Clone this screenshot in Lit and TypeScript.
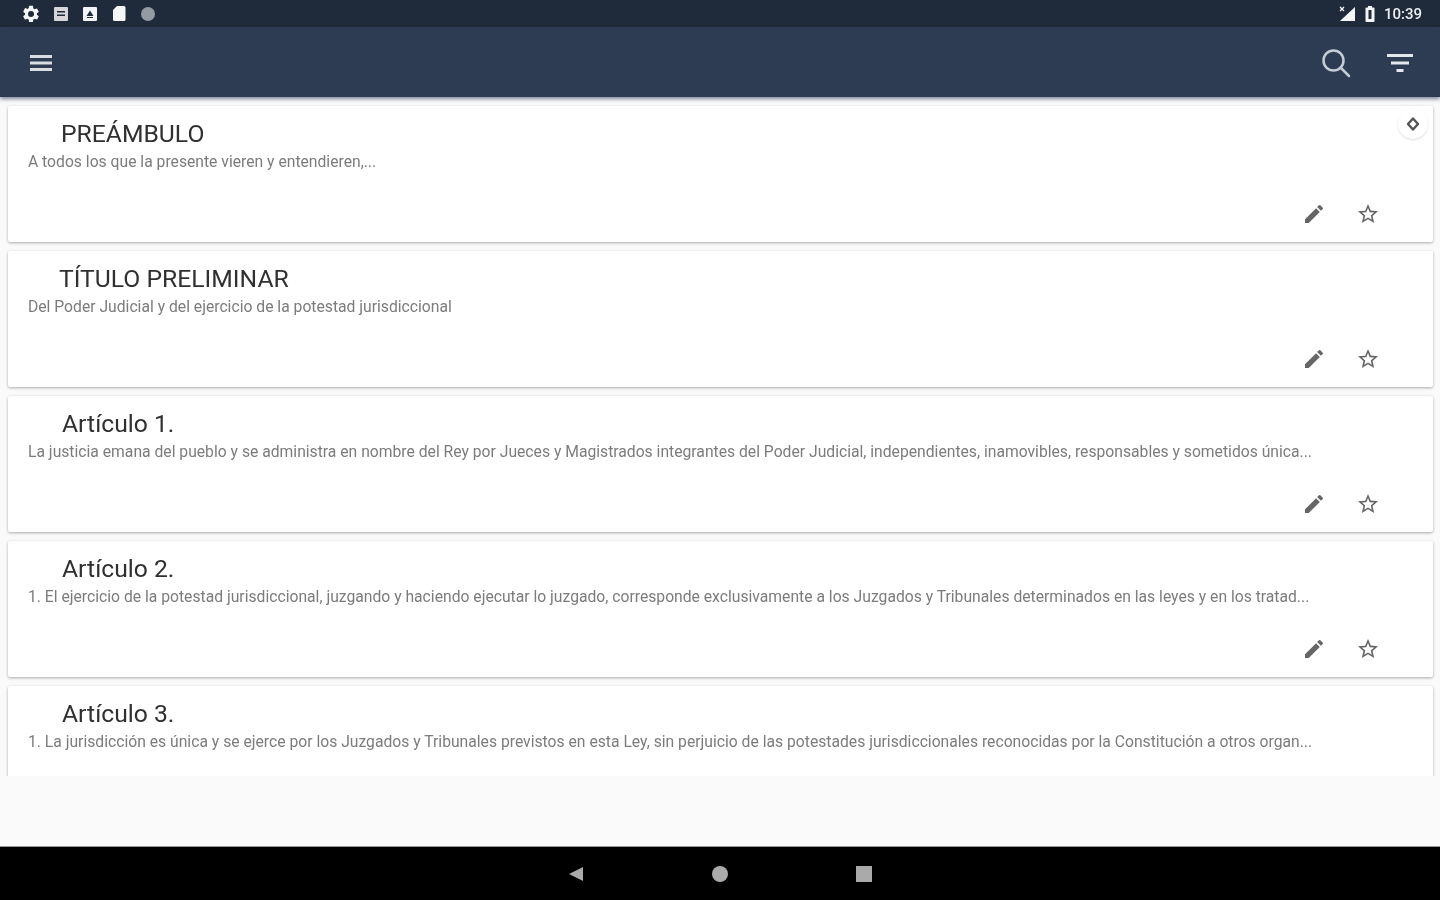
import { LitElement, html, css, svg } from "lit";
import { customElement } from "lit/decorators.js";

const items = [
  { t: "PREÁMBULO", x: 33, s: "A todos los que la presente vieren y entendieren,...", pin: true },
  { t: "TÍTULO PRELIMINAR", x: 31, s: "Del Poder Judicial y del ejercicio de la potestad jurisdiccional" },
  { t: "Artículo 1.", x: 34, s: "La justicia emana del pueblo y se administra en nombre del Rey por Jueces y Magistrados integrantes del Poder Judicial, independientes, inamovibles, responsables y sometidos única..." },
  { t: "Artículo 2.", x: 34, s: "1. El ejercicio de la potestad jurisdiccional, juzgando y haciendo ejecutar lo juzgado, corresponde exclusivamente a los Juzgados y Tribunales determinados en las leyes y en los tratad..." },
  { t: "Artículo 3.", x: 34, s: "1. La jurisdicción es única y se ejerce por los Juzgados y Tribunales previstos en esta Ley, sin perjuicio de las potestades jurisdiccionales reconocidas por la Constitución a otros organ..." },
];

const gear = svg`<path d="M19.14 12.94c.04-.3.06-.61.06-.94s-.02-.64-.07-.94l2.03-1.58a.49.49 0 0 0 .12-.61l-1.92-3.32a.49.49 0 0 0-.59-.22l-2.39.96a7 7 0 0 0-1.62-.94l-.36-2.54A.48.48 0 0 0 13.92 2h-3.84a.47.47 0 0 0-.47.41l-.36 2.54c-.59.24-1.13.57-1.62.94l-2.39-.96a.48.48 0 0 0-.59.22L2.74 8.87a.47.47 0 0 0 .12.61l2.03 1.58c-.05.3-.09.63-.09.94s.02.64.07.94l-2.03 1.58a.49.49 0 0 0-.12.61l1.92 3.32c.12.22.37.29.59.22l2.39-.96c.5.38 1.03.7 1.62.94l.36 2.54c.05.24.24.41.48.41h3.84c.24 0 .44-.17.47-.41l.36-2.54c.59-.24 1.13-.56 1.62-.94l2.39.96c.22.08.47 0 .59-.22l1.92-3.32a.47.47 0 0 0-.12-.61l-2.01-1.58zM12 15.6A3.6 3.6 0 1 1 12 8.4a3.6 3.6 0 0 1 0 7.2z"/>`;

@customElement("app-root")
export class AppRoot extends LitElement {
  static styles = css`
    :host { display: flex; flex-direction: column; height: 900px; width: 1440px; background: #fafafa; font-family: Roboto, "Liberation Sans", sans-serif; overflow: hidden; filter: blur(.55px); }
    .status { height: 27px; flex: none; background: #1f2a3a; display: flex; align-items: center; padding: 0 18px 0 21px; }
    .status-left { display: flex; align-items: center; gap: 11px; flex: 1; }
    .status-left svg, .status-right svg { display: block; fill: #f4f5f6; }
    .status-right { display: flex; align-items: center; color: #eceef0; font-size: 15px; font-weight: 500; }
    .sim { margin-right: 7px; }
    .batt { margin-right: 7px; }
    .toolbar { height: 70px; box-sizing: border-box; padding: 2px 27px 0 30px; flex: none; background: #2d3c52; display: flex; align-items: center; box-shadow: 0 2px 4px rgba(20,35,70,.55); position: relative; z-index: 1; }
    .toolbar svg { display: block; }
    .spacer { flex: 1; }
    .search { margin-right: 36px; }
    .list { height: 679px; box-sizing: border-box; flex: none; overflow: hidden; padding: 9px 7px 0 8px; display: flex; flex-direction: column; gap: 9px; background: #fafafa; }
    .card { flex: none; height: 136px; box-sizing: border-box; background: #fff; border-radius: 2px; box-shadow: 0 1px 3px rgba(0,0,0,.32); display: flex; flex-direction: column; padding: 13px 0 0 20px; position: relative; }
    .title { font-size: 24.7px; line-height: 30px; color: #303030; }
    .sub { font-size: 15.69px; line-height: 18px; margin-top: 4px; color: #7c7c7c; white-space: nowrap; }
    .actions { margin-top: auto; height: 24px; margin-bottom: 16px; display: flex; justify-content: flex-end; gap: 30px; padding-right: 53px; }
    .actions svg { display: block; fill: #666; }
    .pin { position: absolute; top: 3px; right: 5px; width: 30px; height: 30px; border-radius: 50%; background: #fff; box-shadow: 0 1px 2px rgba(0,0,0,.14); display: flex; align-items: center; justify-content: center; }
    .pin svg { display: block; }
    .fill { flex: 1; background: #fafafa; }
    .nav { height: 54px; flex: none; background: #000; border-top: 1px solid #999; box-sizing: border-box; display: flex; align-items: center; justify-content: center; gap: 127px; }
    .nav svg { display: block; fill: #aaa; }
  `;

  render() {
    return html`
      <div class="status">
        <div class="status-left">
          <svg width="20" height="20" viewBox="0 0 24 24">${gear}</svg>
          <svg width="18" height="18" viewBox="0 0 18 18"><path fill-rule="evenodd" d="M3 2h12a1 1 0 0 1 1 1v12a1 1 0 0 1-1 1H3a1 1 0 0 1-1-1V3a1 1 0 0 1 1-1zm2 4v1.500h8V6zm0 3.500V11h8V9.500z" opacity=".85"/></svg>
          <svg width="18" height="18" viewBox="0 0 18 18"><path fill-rule="evenodd" d="M3 2h12a1 1 0 0 1 1 1v12a1 1 0 0 1-1 1H3a1 1 0 0 1-1-1V3a1 1 0 0 1 1-1zm6 3.500L5.500 11h7zM6 12v1h6v-1z"/></svg>
          <svg width="18" height="18" viewBox="0 0 18 18"><path d="M7 1h7a1.500 1.500 0 0 1 1.500 1.500v12A1.500 1.500 0 0 1 14 16H4.500A1.500 1.500 0 0 1 3 14.500V5z"/></svg>
          <svg width="18" height="18" viewBox="0 0 18 18"><circle cx="9" cy="9" r="7" opacity=".55"/></svg>
        </div>
        <div class="status-right">
          <svg class="sim" width="18" height="18" viewBox="0 0 18 18"><path d="M17 2v14H2z"/><path d="M2 2l4 4M6 2L2 6" stroke="#f4f5f6" stroke-width="1.300"/></svg>
          <svg class="batt" width="14" height="18" viewBox="0 0 14 18"><path fill-rule="evenodd" d="M5 1h4v1.500h1.500a1 1 0 0 1 1 1V16a1 1 0 0 1-1 1h-7a1 1 0 0 1-1-1V3.500a1 1 0 0 1 1-1H5zM5.500 5v9h3V5z"/></svg>
          <span>10:39</span>
        </div>
      </div>
      <div class="toolbar">
        <svg width="22" height="18" viewBox="0 0 22 18"><path fill="#d9dde2" d="M0 1h22v3H0zM0 7.500h22v3H0zM0 14h22v3H0z"/></svg>
        <div class="spacer"></div>
        <svg class="search" width="30" height="30" viewBox="0 0 30 30" fill="none" stroke="#c4ccd4" stroke-width="2.500"><circle cx="12.500" cy="12.500" r="10"/><path d="M19.500 19.500L28 28" stroke-linecap="round"/></svg>
        <svg width="26" height="20" viewBox="0 0 26 20"><path fill="#e3e6ea" d="M0 1h26v3H0zM4 8.500h18v3H4zM9.500 16h7v3h-7z"/></svg>
      </div>
      <div class="list">
        ${items.map(
          (i) => html`<div class="card">
            <div class="title" style="padding-left:${i.x}px">${i.t}</div>
            <div class="sub">${i.s}</div>
            <div class="actions">
              <svg width="24" height="24" viewBox="0 0 24 24"><path d="M3 17.250V21h3.750L17.810 9.940l-3.750-3.750L3 17.250zM20.710 7.040a1 1 0 0 0 0-1.410l-2.340-2.340a1 1 0 0 0-1.410 0l-1.830 1.830 3.750 3.750 1.830-1.830z"/></svg>
              <svg width="24" height="24" viewBox="0 0 24 24"><path d="M22 9.240l-7.190-.62L12 2 9.190 8.630 2 9.240l5.460 4.730L5.820 21 12 17.270 18.180 21l-1.630-7.030L22 9.240zM12 15.400l-3.760 2.270 1-4.280-3.320-2.880 4.380-.38L12 6.100l1.710 4.040 4.380.38-3.320 2.880 1 4.280L12 15.400z"/></svg>
            </div>
            ${i.pin
              ? html`<div class="pin"><svg width="16" height="16" viewBox="0 0 16 16" fill="none" stroke="#555" stroke-width="2.400"><path d="M8 2.500L13 8 8 13.500 3 8z" stroke-linejoin="round"/></svg></div>`
              : ""}
          </div>`
        )}
      </div>
      <div class="fill"></div>
      <div class="nav">
        <svg width="16" height="16" viewBox="0 0 16 16"><path d="M15 1v14L1 8z"/></svg>
        <svg width="18" height="18" viewBox="0 0 18 18"><circle cx="9" cy="9" r="8"/></svg>
        <svg width="16" height="16" viewBox="0 0 16 16"><path d="M0 0h16v16H0z"/></svg>
      </div>
    `;
  }
}
